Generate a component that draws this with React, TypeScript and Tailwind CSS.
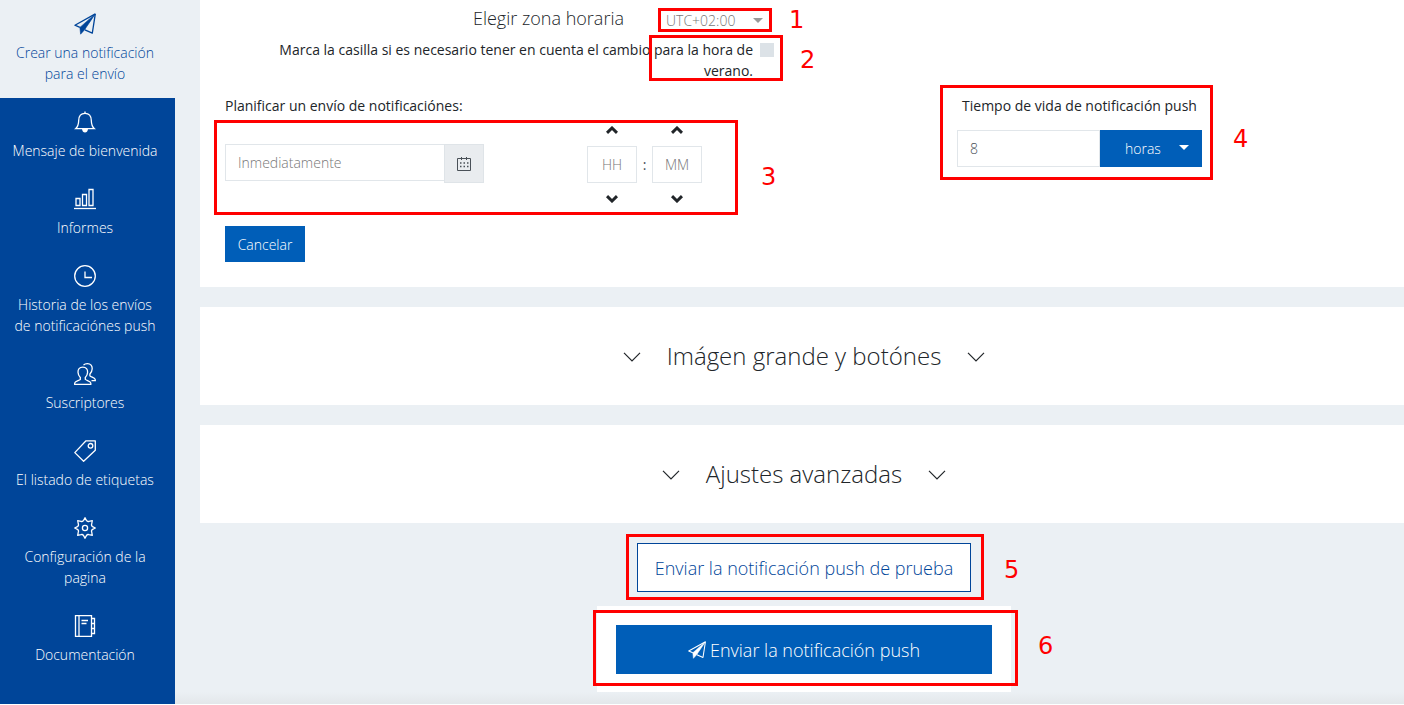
import { ReactNode } from "react";
import clsx from "clsx";

function Icon({
  children,
  className = "w-[22px] h-[22px]",
}: {
  children: ReactNode;
  className?: string;
}) {
  return (
    <svg
      viewBox="0 0 22 22"
      fill="none"
      stroke="currentColor"
      strokeWidth="1.3"
      aria-hidden="true"
      className={className}
    >
      {children}
    </svg>
  );
}

const planePaths = (
  <>
    <path d="M21.3 0.9 L0.9 12.2 L5.9 14.4 M21.3 0.9 L18.3 20.2 L10.9 16.8" strokeLinejoin="round" />
    <path d="M21.3 0.9 L5.9 14.4 L6.6 21.2 L10.6 16.7 Z" fill="currentColor" strokeWidth="0.6" />
  </>
);

const menu = [
  {
    lines: ["Crear una notificación", "para el envío"],
    icon: planePaths,
    active: true,
  },
  {
    lines: ["Mensaje de bienvenida"],
    icon: (
      <>
        <path d="M1.6 17.7 C4.2 15.5 4.6 13.5 4.7 9.5 C4.8 5 7 2.4 11 2.4 C15 2.4 17.2 5 17.3 9.5 C17.4 13.5 17.8 15.5 20.4 17.7 Z" />
        <path d="M11 0.4 V2.4" />
        <path d="M8 18 C8.3 20.5 9.5 21.5 11 21.5 C12.5 21.5 13.7 20.5 14 18 Z" fill="currentColor" stroke="none" />
      </>
    ),
  },
  {
    lines: ["Informes"],
    icon: (
      <>
        <path d="M0 20.5 H22" />
        <path d="M2 17.5 V10.5 H6 V17.5 M8.5 17.5 V6.5 H12.5 V17.5 M15 17.5 V1.5 H19 V17.5 M1.4 17.5 H6.6 M7.9 17.5 H13.1 M14.4 17.5 H19.6" />
      </>
    ),
  },
  {
    lines: ["Historia de los envíos", "de notificaciónes push"],
    icon: (
      <>
        <circle cx="11" cy="11" r="10.3" />
        <path d="M11 6.5 V12.5 H18" />
      </>
    ),
  },
  {
    lines: ["Suscriptores"],
    icon: (
      <>
        <path d="M8.8 4.2 C5.3 4.2 3.9 6.5 4 9.2 C4.1 11.5 5 13.2 6.3 14.4 V16.4 C5 17.6 0.8 18 0.7 20 V21.3 H16.8 V20 C16.7 18 12.5 17.6 11.3 16.4 V14.4 C12.6 13.2 13.5 11.5 13.6 9.2 C13.7 6.5 12.3 4.2 8.8 4.2 Z" />
        <path d="M9.5 2.2 C10.5 1 11.8 0.7 13.4 0.7 C16.8 0.7 18.3 3 18.2 5.8 C18.1 8 17.2 9.7 15.9 10.9 V12.9 C17 14.2 21.2 14.7 21.3 16.7 V17.7 H17.5" />
      </>
    ),
  },
  {
    lines: ["El listado de etiquetas"],
    icon: (
      <>
        <path d="M21.3 0.8 H12 L0.8 12.6 L9.6 21.3 L21.3 10.2 Z" strokeLinejoin="round" />
        <circle cx="16.5" cy="5.8" r="2.3" />
      </>
    ),
  },
  {
    lines: ["Configuración de la", "pagina"],
    icon: (
      <>
        <path
          d="M11 0.7 L12.4 3.4 Q13.4 5 15 4.3 L18.3 3.7 L17.7 7 Q17 8.6 18.6 9.6 L21.3 11 L18.6 12.4 Q17 13.4 17.7 15 L18.3 18.3 L15 17.7 Q13.4 17 12.4 18.6 L11 21.3 L9.6 18.6 Q8.6 17 7 17.7 L3.7 18.3 L4.3 15 Q5 13.4 3.4 12.4 L0.7 11 L3.4 9.6 Q5 8.6 4.3 7 L3.7 3.7 L7 4.3 Q8.6 5 9.6 3.4 Z"
          strokeLinejoin="round"
        />
        <circle cx="11" cy="11" r="2.6" />
      </>
    ),
  },
  {
    lines: ["Documentación"],
    icon: (
      <>
        <path d="M1.5 0.5 H17.5 V21.5 H1.5 Z M5 0.5 V21.5 M7.5 5.5 H14 M7.5 8.5 H12.5" />
        <path d="M17.5 3.5 H20.5 V18.5 H17.5 M18 8.5 H21 M18 13.5 H21" />
      </>
    ),
  },
];

// red frame with its step number, laid over the form
function Callout({
  step,
  frame,
  number,
}: {
  step: number;
  frame: string;
  number: string;
}) {
  return (
    <div
      className={clsx(
        "absolute border-3 border-[#ff0000] pointer-events-none z-10",
        frame
      )}
    >
      <span
        className={clsx(
          "absolute left-full font-['DejaVu_Sans',sans-serif] text-2xl leading-6 text-[#ff0000]",
          number
        )}
      >
        {step}
      </span>
    </div>
  );
}

function Caret({ className }: { className: string }) {
  return (
    <svg
      viewBox="0 0 10 5"
      aria-hidden="true"
      className={clsx("absolute w-[10px] h-[5px] pointer-events-none", className)}
    >
      <path d="M0 0 H10 L5 5 Z" fill="currentColor" />
    </svg>
  );
}

function Arrow({ down, label }: { down?: boolean; label: string }) {
  return (
    <button type="button" aria-label={label} className="h-4 flex items-center">
      <svg viewBox="0 0 12 8" className="w-3 h-2" fill="none" stroke="currentColor" strokeWidth="3">
        <path d={down ? "M1 1.2 L6 6 L11 1.2" : "M1 6.8 L6 2 L11 6.8"} />
      </svg>
    </button>
  );
}

function TimeField({ hint, label }: { hint: string; label: string }) {
  return (
    <div className="flex flex-col items-center gap-2">
      <Arrow label={`Subir ${label}`} />
      <input
        aria-label={label}
        placeholder={hint}
        className="w-[50px] h-[37px] border border-[#e1e6ea] text-center text-sm font-light placeholder:text-[#777777]"
      />
      <Arrow down label={`Bajar ${label}`} />
    </div>
  );
}

function Panel({ title }: { title: string }) {
  const chevron = (
    <svg viewBox="0 0 18 10" className="mt-[2px] w-[18px] h-[10px]" fill="none" stroke="currentColor" strokeWidth="1.2" aria-hidden="true">
      <path d="M1 0.8 L9 8.8 L17 0.8" />
    </svg>
  );
  return (
    <section className="bg-white">
      <button type="button" className="w-full h-[98px] pl-1 flex items-center justify-center gap-[26px]">
        {chevron}
        <span className="text-2xl font-light">{title}</span>
        {chevron}
      </button>
    </section>
  );
}

export default function App() {
  return (
    <div className="min-h-screen flex bg-[#ebf0f4] border-b border-white font-['Open_Sans',sans-serif] text-sm leading-[21px] text-[#212529]">
      <nav className="w-[175px] shrink-0 bg-[#004599] text-white">
        {menu.map((item) => (
          <a
            key={item.lines[0]}
            href="#"
            className={clsx(
              "flex flex-col items-center gap-[7px] pt-[13px] pb-[14px] pr-[5px] text-center",
              item.active
                ? "bg-[#ebf0f4] font-light text-[#004599]"
                : "font-[350]"
            )}
          >
            <Icon>{item.icon}</Icon>
            <span>
              {item.lines.map((line) => (
                <span key={line} className="block">
                  {line}
                </span>
              ))}
            </span>
          </a>
        ))}
      </nav>

      <main className="flex-1 flex flex-col pl-[25px]">
        <section className="bg-white px-[25px] pt-2 pb-[25px]">
          <div className="flex w-[549px] flex-col gap-[7px]">
            <div className="flex items-start justify-end">
              <label htmlFor="zone" className="text-lg leading-5 font-light">
                Elegir zona horaria
              </label>
              <div className="relative ml-[34px] mr-[2px] flex h-6 w-[114px] items-center">
                <select
                  id="zone"
                  className="w-full h-full pl-2 pt-px appearance-none text-sm font-light text-[#777777]"
                >
                  <option>UTC+02:00</option>
                </select>
                <Caret className="right-[9px] top-[10px] text-[#999999]" />
                <Callout step={1} frame="inset-0" number="ml-5 -top-[3px]" />
              </div>
            </div>
            <div className="relative flex justify-end gap-[7px]">
              <label htmlFor="summer" className="w-[500px] text-right">
                Marca la casilla si es necesario tener en cuenta el cambio para
                la hora de verano.
              </label>
              <input
                id="summer"
                type="checkbox"
                className="mt-1 size-[14px] appearance-none bg-[#dce2e7]"
              />
              <Callout
                step={2}
                frame="-right-[9px] -top-[4px] w-[134px] h-[46px]"
                number="ml-5 top-[10px]"
              />
            </div>
          </div>

          <div className="mt-[14px] flex items-start">
            <div className="w-1/2">
              <label htmlFor="date" className="block">
                Planificar un envío de notificaciónes:
              </label>
              <div className="relative mt-[6px] flex w-[477px] items-center justify-between">
                <div className="flex items-start pb-[2px]">
                  <input
                    id="date"
                    placeholder="Inmediatamente"
                    className="w-[220px] h-[37px] border border-[#e1e6ea] px-3 font-light placeholder:text-[#777777]"
                  />
                  <button
                    type="button"
                    aria-label="Calendario"
                    className="-ml-px w-10 h-[39px] flex items-center justify-center border border-[#dfe4e8] bg-[#e9ecef] text-[#495057]"
                  >
                    <svg viewBox="0 0 14 14" className="w-[14px] h-[14px]" fill="none" stroke="currentColor">
                      <path d="M0.5 1.5 H13.5 V13.5 H0.5 Z M4.5 0 V3 M9.5 0 V3" />
                      <path d="M3 6 H11.5 M3 9.5 H11.5" strokeWidth="1.5" strokeDasharray="1.5 2" />
                    </svg>
                  </button>
                </div>
                <div className="flex items-center">
                  <TimeField hint="HH" label="Horas" />
                  <span className="w-[15px] text-center text-[#495057]">:</span>
                  <TimeField hint="MM" label="Minutos" />
                </div>
                <Callout
                  step={3}
                  frame="-left-[11px] -right-9 -top-[2px] h-[95px]"
                  number="ml-[26px] top-[42px]"
                />
              </div>
              <button type="button" className="mt-[19px] h-9 w-20 bg-[#005eb8] font-[350] text-white">
                Cancelar
              </button>
            </div>

            <div className="relative ml-[155px] w-[245px]">
              <label htmlFor="ttl" className="block text-center">
                Tiempo de vida de notificación push
              </label>
              <div className="mt-[14px] flex">
                <input
                  id="ttl"
                  defaultValue="8"
                  className="min-w-0 flex-1 h-[37px] border border-[#e1e6ea] px-3 font-light text-[#495057]"
                />
                <div className="relative">
                  <select
                    aria-label="Unidad de tiempo"
                    className="w-[102px] h-[37px] appearance-none bg-[#005eb8] pl-[25px] font-[350] text-white"
                  >
                    <option>horas</option>
                  </select>
                  <Caret className="right-[13px] top-[15px] text-white" />
                </div>
              </div>
              <Callout
                step={4}
                frame="-left-[17px] -right-[11px] -top-[10px] h-[95px]"
                number="ml-[23px] top-[39px]"
              />
            </div>
          </div>
        </section>

        <div className="mt-5 flex flex-col gap-5">
          <Panel title="Imágen grande y botónes" />
          <Panel title="Ajustes avanzadas" />
        </div>

        <div className="mt-5 flex flex-col items-center gap-[14px] pl-1">
          <div className="relative">
            <button
              type="button"
              className="h-[49px] w-[334px] border border-[#004599] bg-white text-lg font-light text-[#004599]"
            >
              Enviar la notificación push de prueba
            </button>
            <Callout
              step={5}
              frame="-left-[11px] -right-[13px] -top-[9px] h-[66px]"
              number="ml-[23px] top-[21px]"
            />
          </div>
          <div className="relative bg-white px-[19px] pt-[19px] pb-[18px]">
            <button
              type="button"
              className="flex h-[49px] w-[376px] items-center justify-center gap-1 bg-[#005eb8] text-lg font-light text-white"
            >
              <Icon className="w-[18px] h-[18px]">{planePaths}</Icon>
              Enviar la notificación push
            </button>
            <Callout
              step={6}
              frame="-left-1 -right-[7px] top-1 h-[76px]"
              number="ml-[23px] top-[21px]"
            />
          </div>
        </div>
        <div className="-ml-[25px] mt-auto h-3 bg-linear-to-b from-[#ebf0f4] to-[#e3e7ea]" />
      </main>
    </div>
  );
}
